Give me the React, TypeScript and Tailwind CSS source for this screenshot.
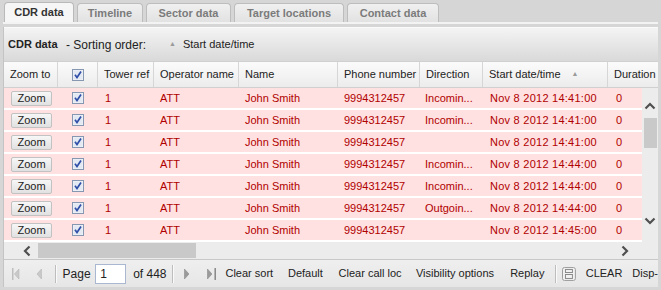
import React from 'react';

const Check = () => (
  <svg width="12" height="12" viewBox="0 0 12 12">
    <rect x="0.5" y="0.5" width="11" height="11" fill="#f3f5f9" stroke="#8697b1" />
    <rect x="1.5" y="1.5" width="9" height="9" fill="#e3e9f2" />
    <path d="M3 5.8 L5 8.5 L9 2.6" stroke="#2f4ea8" strokeWidth="1.7" fill="none" />
  </svg>
);

const ChevUp = () => (
  <svg width="12" height="8" viewBox="0 0 12 8">
    <path d="M1.5 6.5 L6 2 L10.5 6.5" stroke="#505050" strokeWidth="2.2" fill="none" />
  </svg>
);
const ChevDown = () => (
  <svg width="12" height="8" viewBox="0 0 12 8">
    <path d="M1.5 1.5 L6 6 L10.5 1.5" stroke="#505050" strokeWidth="2.2" fill="none" />
  </svg>
);
const ChevLeft = () => (
  <svg width="8" height="12" viewBox="0 0 8 12">
    <path d="M6.5 1.5 L2 6 L6.5 10.5" stroke="#505050" strokeWidth="2.2" fill="none" />
  </svg>
);
const ChevRight = () => (
  <svg width="8" height="12" viewBox="0 0 8 12">
    <path d="M1.5 1.5 L6 6 L1.5 10.5" stroke="#505050" strokeWidth="2.2" fill="none" />
  </svg>
);

const Sep = () => (
  <div className="flex h-[18px]">
    <div className="w-px bg-[#bdbdbd]" />
    <div className="w-px bg-[#fafafa]" />
  </div>
);

const tabs = [
  { label: 'CDR data', w: 'w-[70px]', active: true },
  { label: 'Timeline', w: 'w-[66px]', active: false },
  { label: 'Sector data', w: 'w-[85px]', active: false },
  { label: 'Target locations', w: 'w-[110px]', active: false },
  { label: 'Contact data', w: 'w-[92px]', active: false },
];

const cols = [
  { label: 'Zoom to', w: 'w-[54px]' },
  { label: 'check', w: 'w-[40px]' },
  { label: 'Tower ref', w: 'w-[56px]' },
  { label: 'Operator name', w: 'w-[85px]' },
  { label: 'Name', w: 'w-[99px]' },
  { label: 'Phone number', w: 'w-[82px]' },
  { label: 'Direction', w: 'w-[63px]' },
  { label: 'Start date/time', w: 'w-[125px]' },
];

const rows = [
  { dir: 'Incomin...', t: '14:41:00' },
  { dir: 'Incomin...', t: '14:41:00' },
  { dir: '', t: '14:41:00' },
  { dir: 'Incomin...', t: '14:44:00' },
  { dir: 'Incomin...', t: '14:44:00' },
  { dir: 'Outgoin...', t: '14:44:00' },
  { dir: '', t: '14:45:00' },
];

export default function App() {
  return (
    <div className="w-[661px] h-[290px] overflow-hidden bg-[#d6d6d6] font-['Liberation_Sans',Arial,sans-serif] text-[11px] text-[#222]">
      {/* tabs */}
      <div className="flex items-end h-[22px] pl-[4px] gap-[3px]">
        {tabs.map((t) => (
          <div
            key={t.label}
            className={
              t.active
                ? `${t.w} h-[20px] flex items-center justify-center rounded-t-[4px] border border-b-0 border-[#b9b9b9] bg-[#f6f6f6] font-bold text-[#333] text-[11px]`
                : `${t.w} h-[19px] flex items-center justify-center rounded-t-[4px] border border-b-0 border-[#bdbdbd] bg-gradient-to-b from-[#f0f0f0] to-[#e2e2e2] font-bold text-[#7b7b7b] text-[11px]`
            }
          >
            {t.label}
          </div>
        ))}
      </div>
      <div className="h-[2px] bg-[#f3f3f3] mx-[3px]" />
      <div className="h-[3px]" />
      {/* panel */}
      <div className="mx-[3px] border-l border-[#c4c4c4] bg-[#ececec]">
        {/* title band */}
        <div className="h-[34px] flex items-center pl-[4px] bg-gradient-to-b from-[#f4f4f4] to-[#d9d9d9] border-t border-[#fafafa]">
          <span className="w-[58px] font-bold text-[11px] text-[#222]">CDR data</span>
          <span className="w-[103px] text-[12px] text-[#222]">- Sorting order:</span>
          <span className="text-[7px] text-[#9a9a9a]">▲</span>
          <span className="ml-[7px] text-[11px] text-[#222]">Start date/time</span>
        </div>
        {/* header row */}
        <div className="flex h-[27px] bg-gradient-to-b from-[#fbfbfb] to-[#ececec] border-t border-[#cfcfcf] border-b border-[#d0d0d0]">
          {cols.map((c) => (
            <div key={c.label} className={`${c.w} shrink-0 flex items-center border-r border-[#d6d6d6] ${c.label === 'check' ? 'justify-center' : 'pl-[6px]'}`}>
              {c.label === 'check' ? (
                <Check />
              ) : c.label === 'Start date/time' ? (
                <>
                  <span>Start date/time</span>
                  <span className="ml-[11px] text-[7px] text-[#9a9a9a]">▲</span>
                </>
              ) : (
                <span className="whitespace-nowrap">{c.label}</span>
              )}
            </div>
          ))}
          <div className="flex-1 flex items-center pl-[6px] overflow-hidden">
            <span className="whitespace-nowrap">Duration</span>
          </div>
        </div>
        {/* body */}
        <div className="flex h-[154px] bg-[#ffffff]">
          <div className="w-[638px] shrink-0">
            {rows.map((r, i) => (
              <div key={i} className="flex h-[22px] bg-[#ffe1e1] border-b-2 border-white text-[#b00000] text-[11px]">
                <div className="w-[54px] shrink-0 flex items-center pl-[7px]">
                  <div className="w-[41px] h-[15px] flex items-center justify-center border border-[#c2c2c2] rounded-[2px] bg-gradient-to-b from-[#f7f7f7] to-[#e1e1e1] text-[#222] text-[11px]">
                    Zoom
                  </div>
                </div>
                <div className="w-[40px] shrink-0 flex items-center justify-center">
                  <Check />
                </div>
                <div className="w-[56px] shrink-0 flex items-center pl-[7px]">1</div>
                <div className="w-[85px] shrink-0 flex items-center pl-[6px]">ATT</div>
                <div className="w-[99px] shrink-0 flex items-center pl-[6px]">John Smith</div>
                <div className="w-[82px] shrink-0 flex items-center pl-[6px]">9994312457</div>
                <div className="w-[63px] shrink-0 flex items-center pl-[5px] whitespace-nowrap">{r.dir}</div>
                <div className="w-[125px] shrink-0 flex items-center pl-[7px] whitespace-nowrap tracking-[0.25px]">Nov 8 2012 {r.t}</div>
                <div className="flex-1 flex items-center pl-[8px]">0</div>
              </div>
            ))}
          </div>
          {/* vertical scrollbar */}
          <div className="flex-1 flex flex-col items-center bg-[#ececec]">
            <div className="h-[14px]" />
            <ChevUp />
            <div className="mt-[8px] w-[13px] h-[30px] bg-[#c9c9c9]" />
            <div className="flex-1" />
            <ChevDown />
            <div className="h-[17px]" />
          </div>
        </div>
        {/* horizontal scrollbar */}
        <div className="flex items-center h-[17px] bg-[#ececec]">
          <div className="w-[34px] flex justify-end pr-[7px]">
            <ChevLeft />
          </div>
          <div className="w-[158px] h-[15px] bg-[#c9c9c9]" />
          <div className="flex-1" />
          <div className="w-[40px] flex pl-[3px]">
            <ChevRight />
          </div>
        </div>
        {/* pager */}
        <div className="flex items-center h-[28px] border-t border-[#c8c8c8] bg-gradient-to-b from-[#efefef] to-[#e6e6e6] text-[11px] text-[#222] whitespace-nowrap">
          <div className="w-[8px]" />
          <svg width="8" height="12" viewBox="0 0 8 12">
            <rect x="0" y="0" width="1.5" height="12" fill="#bdbdbd" />
            <path d="M7 1 L2.5 6 L7 11 Z" fill="#c9c9c9" stroke="#b5b5b5" strokeWidth="0.6" />
          </svg>
          <div className="w-[16px]" />
          <svg width="6" height="12" viewBox="0 0 6 12">
            <path d="M5.5 1 L1 6 L5.5 11 Z" fill="#c9c9c9" stroke="#b5b5b5" strokeWidth="0.6" />
          </svg>
          <div className="w-[13px]" />
          <Sep />
          <span className="ml-[6px] w-[33px] text-[12px]">Page</span>
          <div className="w-[31px] h-[20px] border border-[#a9b8d0] bg-white flex items-center pl-[4px] text-[12px]">1</div>
          <span className="ml-[7px] w-[39px] text-[12px]">of 448</span>
          <Sep />
          <div className="w-[10px]" />
          <svg width="6" height="12" viewBox="0 0 6 12">
            <path d="M0.5 1 L5 6 L0.5 11 Z" fill="#9a9a9a" stroke="#8a8a8a" strokeWidth="0.6" />
          </svg>
          <div className="w-[17px]" />
          <svg width="10" height="12" viewBox="0 0 10 12">
            <path d="M0.5 1 L5 6 L0.5 11 Z" fill="#9a9a9a" stroke="#8a8a8a" strokeWidth="0.6" />
            <rect x="7.5" y="0" width="1.8" height="12" fill="#8a8a8a" />
          </svg>
          <div className="w-[63px] ml-[9px]">Clear sort</div>
          <div className="w-[51px]">Default</div>
          <div className="w-[78px]">Clear call loc</div>
          <div className="w-[95px]">Visibility options</div>
          <div className="w-[45px]">Replay</div>
          <Sep />
          <svg className="ml-[5px]" width="14" height="14" viewBox="0 0 14 14">
            <rect x="0.5" y="0.5" width="13" height="13" rx="2" fill="#f2f2f2" stroke="#9b9b9b" />
            <rect x="3.5" y="2.5" width="7" height="3" fill="none" stroke="#8a8a8a" />
            <rect x="3.5" y="7.5" width="7" height="4" fill="none" stroke="#8a8a8a" />
          </svg>
          <div className="ml-[10px] w-[47px]">CLEAR</div>
          <div>Disp-</div>
        </div>
      </div>
    </div>
  );
}
